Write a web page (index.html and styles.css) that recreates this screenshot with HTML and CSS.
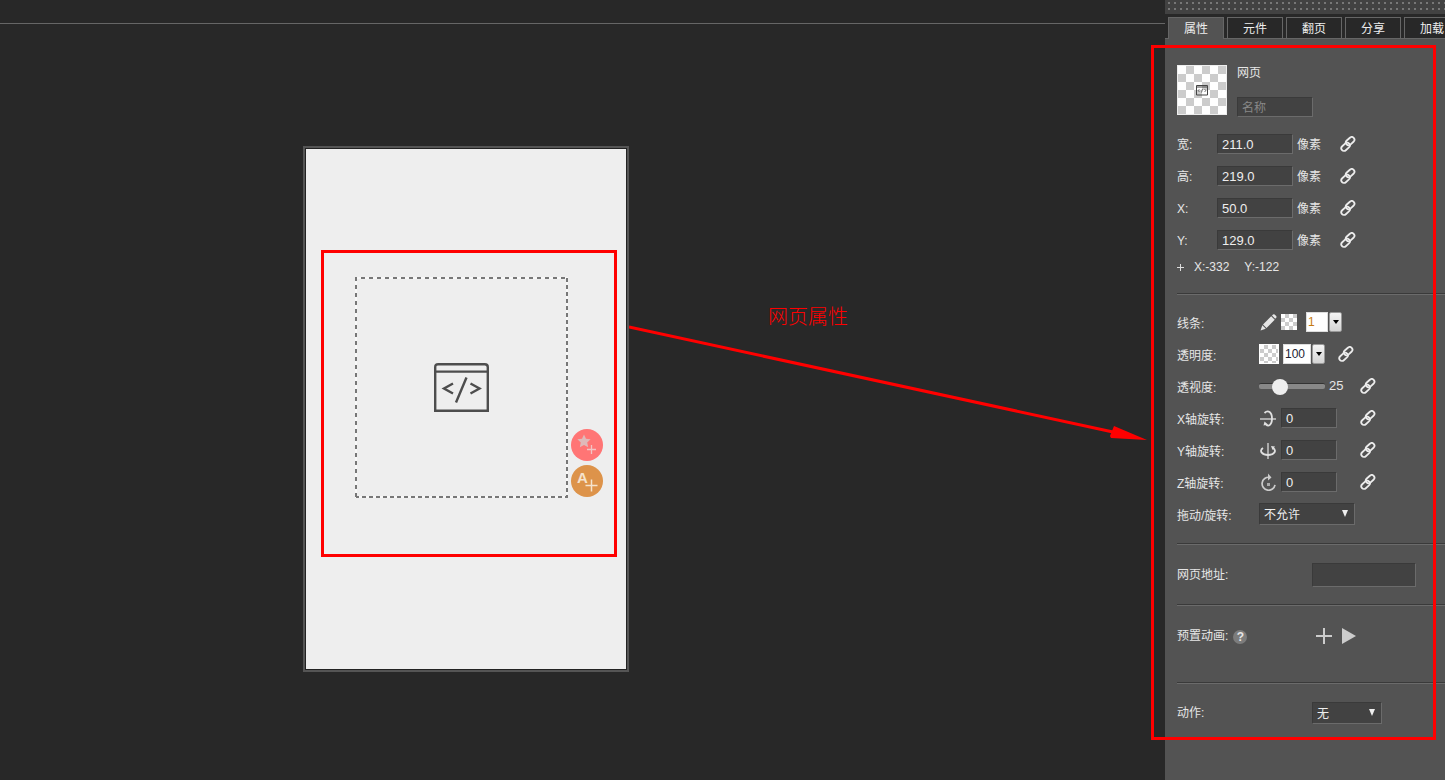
FILE: index.html
```
<!DOCTYPE html>
<html lang="zh-CN">
<head>
    <meta charset="UTF-8">
    <meta name="viewport" content="width=device-width, initial-scale=1.0">
    <title>网页属性</title>
    <link rel="stylesheet" href="styles.css">
</head>
<body>

<!-- shared icons -->
<svg class="sprite" aria-hidden="true">
    <symbol id="link" viewBox="0 0 16 16">
        <g fill="none" stroke="#ececec" stroke-width="1.8" transform="rotate(-42 8 8)">
            <rect x="-0.5" y="5.8" width="9.6" height="5.4" rx="2.7"/>
            <rect x="6.7" y="4.6" width="9.6" height="5.4" rx="2.7"/>
        </g>
    </symbol>
</svg>

<div class="editor">
    <main class="workspace">
        <div class="ruler"></div>
        <div class="stage">
            <div class="web-element">
                <svg class="dashes" aria-hidden="true">
                    <g fill="none" stroke-width="2">
                        <rect x="1" y="1" width="211" height="219" stroke="#f8f8f8"/>
                        <path d="M1 220V1H212" stroke="#777" stroke-dasharray="4 4"/>
                        <path d="M212 1V220H1" stroke="#777" stroke-dasharray="4 3"/>
                    </g>
                </svg>
                <svg class="code-icon" viewBox="0 0 56 50" aria-hidden="true">
                    <g fill="none" stroke="#4d4d4d" stroke-width="2.4">
                        <path d="M1.2 47.8V4.2q0-3 3-3h46.600q3 0 3 3v43.600zM1.200 8.600h52.600"/>
                        <path d="M19 20.500 10 25.500l9 5M36.500 20.500l9 5-9 5M32.500 14.500 22 39.500"/>
                    </g>
                </svg>
            </div>
            <div class="mark mark-element"></div>
            <div class="float-buttons">
                <button class="round round-star" type="button" aria-label="添加动画">
                    <svg viewBox="0 0 32 32">
                        <path fill="#dfb9b9" d="M13 5.500l2 4.300 4.600.5-3.400 3.200 1 4.800-4.200-2.400-4.200 2.400 1-4.800-3.400-3.200 4.600-.5z"/>
                        <path fill="none" stroke="#f2c4c4" stroke-width="1.300" d="M20.500 16v9M16 20.500h9"/>
                    </svg>
                </button>
                <button class="round round-text" type="button" aria-label="添加文字">
                    <svg viewBox="0 0 32 32">
                        <text x="6" y="18" class="round-letter">A</text>
                        <path fill="none" stroke="#f5e3cd" stroke-width="1.500" d="M20.500 14.500v12M14.500 20.500h12"/>
                    </svg>
                </button>
            </div>
        </div>
        <svg class="arrow" aria-hidden="true">
            <path d="M0 3 484 108" stroke="#f00" stroke-width="3"/>
            <path d="M481 112 485 102 518 116 482 114z" fill="#f00"/>
        </svg>
        <p class="note">网页属性</p>
    </main>

    <aside class="panel">
        <div class="grip"></div>
        <nav class="tabs">
            <button class="tab active" type="button">属性</button>
            <button class="tab" type="button">元件</button>
            <button class="tab" type="button">翻页</button>
            <button class="tab" type="button">分享</button>
            <button class="tab" type="button">加载</button>
        </nav>

        <form class="props">
            <section class="group group-size">
                <div class="head">
                    <div class="thumb">
                        <svg viewBox="0 0 12 11" aria-hidden="true">
                            <path d="M.5.5h11v9.500H.5zM.5 2h11" fill="none" stroke="#444"/>
                            <path d="M3.500 4.500 2 5.500l1.500 1.500M8.500 4.500l1.500 1-1.500 1.500M6.500 4 5.500 7.500" fill="none" stroke="#555" stroke-width=".8"/>
                        </svg>
                    </div>
                    <div class="head-text">
                        <label for="name">网页</label>
                        <input class="field" type="text" id="name" placeholder="名称">
                    </div>
                </div>
                <div class="row">
                    <label class="short" for="width">宽:</label>
                    <input class="field" type="text" id="width" value="211.0">
                    <span class="unit">像素</span>
                    <button class="link" type="button" aria-label="关联"><svg><use href="#link"/></svg></button>
                </div>
                <div class="row">
                    <label class="short" for="height">高:</label>
                    <input class="field" type="text" id="height" value="219.0">
                    <span class="unit">像素</span>
                    <button class="link" type="button" aria-label="关联"><svg><use href="#link"/></svg></button>
                </div>
                <div class="row">
                    <label class="short" for="pos-x">X:</label>
                    <input class="field" type="text" id="pos-x" value="50.0">
                    <span class="unit">像素</span>
                    <button class="link" type="button" aria-label="关联"><svg><use href="#link"/></svg></button>
                </div>
                <div class="row">
                    <label class="short" for="pos-y">Y:</label>
                    <input class="field" type="text" id="pos-y" value="129.0">
                    <span class="unit">像素</span>
                    <button class="link" type="button" aria-label="关联"><svg><use href="#link"/></svg></button>
                </div>
                <div class="coords">
                    <svg viewBox="0 0 7 7" aria-hidden="true"><path d="M3.500 0v7M0 3.500h7" stroke="#ddd"/></svg>
                    <span>X:-332</span>
                    <span>Y:-122</span>
                </div>
            </section>

            <section class="group group-style">
                <div class="row">
                    <label for="line">线条:</label>
                    <svg class="icon" viewBox="0 0 18 18" aria-hidden="true">
                        <path fill="#e6e6e6" d="M1.500 17.500l1.800-5.200 3.500 3.400zM4 11.500l8.200-8.300 3.500 3.500-8.200 8.300zM13 2.500l1-1q.8-.7 1.600 0l1.600 1.600q.7.8 0 1.600l-1 1z"/>
                    </svg>
                    <span class="checker checker-small"></span>
                    <div class="combo combo-line">
                        <input type="text" id="line" value="1">
                        <button type="button" aria-label="选择线宽"></button>
                    </div>
                </div>
                <div class="row">
                    <label for="opacity">透明度:</label>
                    <span class="checker"></span>
                    <div class="combo combo-opacity">
                        <input type="text" id="opacity" value="100">
                        <button type="button" aria-label="选择透明度"></button>
                    </div>
                    <button class="link" type="button" aria-label="关联"><svg><use href="#link"/></svg></button>
                </div>
                <div class="row">
                    <label for="perspective">透视度:</label>
                    <input class="slider" type="range" id="perspective" min="0" max="100" value="25">
                    <output class="slider-value" for="perspective">25</output>
                    <button class="link" type="button" aria-label="关联"><svg><use href="#link"/></svg></button>
                </div>
                <div class="row">
                    <label for="rotate-x">X轴旋转:</label>
                    <svg class="icon" viewBox="0 0 18 18" aria-hidden="true">
                        <path d="M1 10h16" stroke="#aaa" stroke-width="2"/>
                        <path d="M5.500 4C9 .5 13 3 13 9.500s-3.500 8.500-6 6" fill="none" stroke="#e0e0e0" stroke-width="1.800"/>
                        <path d="M4.500 16.500l1-4 3.500 3z" fill="#e0e0e0"/>
                    </svg>
                    <input class="field field-small" type="text" id="rotate-x" value="0">
                    <button class="link link-end" type="button" aria-label="关联"><svg><use href="#link"/></svg></button>
                </div>
                <div class="row">
                    <label for="rotate-y">Y轴旋转:</label>
                    <svg class="icon" viewBox="0 0 18 18" aria-hidden="true">
                        <path d="M9 2v16" stroke="#aaa" stroke-width="2"/>
                        <path d="M4 7C-.5 10 3.500 14 9 14s9.500-4 5-7" fill="none" stroke="#e0e0e0" stroke-width="1.800"/>
                        <path d="M16 5.500l-4-.5 1.500 4z" fill="#e0e0e0"/>
                    </svg>
                    <input class="field field-small" type="text" id="rotate-y" value="0">
                    <button class="link link-end" type="button" aria-label="关联"><svg><use href="#link"/></svg></button>
                </div>
                <div class="row">
                    <label for="rotate-z">Z轴旋转:</label>
                    <svg class="icon" viewBox="0 0 18 18" aria-hidden="true">
                        <path d="M10.500 4.300a6.500 6.500 0 1 0 5.500 7.500" fill="none" stroke="#ccc" stroke-width="1.700"/>
                        <path d="M9 .5v7l3.500-3z" fill="#ccc"/>
                        <path d="M8 10h3v3H8z" fill="#aaa"/>
                    </svg>
                    <input class="field field-small" type="text" id="rotate-z" value="0">
                    <button class="link link-end" type="button" aria-label="关联"><svg><use href="#link"/></svg></button>
                </div>
                <div class="row">
                    <label for="drag">拖动/旋转:</label>
                    <select class="field select-drag" id="drag">
                        <option>不允许</option>
                    </select>
                </div>
            </section>

            <section class="group group-url">
                <div class="row">
                    <label for="url">网页地址:</label>
                    <input class="field field-url" type="text" id="url">
                </div>
            </section>

            <section class="group group-preset">
                <div class="row">
                    <div class="row-title">预置动画:<span class="help">?</span></div>
                    <button class="plain" type="button" aria-label="添加">
                        <svg viewBox="0 0 16 16"><path d="M8 0v16M0 8h16" stroke="#ccc" stroke-width="2"/></svg>
                    </button>
                    <button class="plain" type="button" aria-label="播放">
                        <svg viewBox="0 0 16 16"><path d="M1 0v16l14-8z" fill="#ccc"/></svg>
                    </button>
                </div>
            </section>

            <section class="group group-action">
                <div class="row">
                    <label for="action">动作:</label>
                    <select class="field select-action" id="action">
                        <option>无</option>
                    </select>
                </div>
            </section>
        </form>
        <div class="mark mark-panel"></div>
    </aside>
</div>

</body>
</html>
```

FILE: styles.css
```
* {
    box-sizing: border-box;
}

body {
    margin: 0;
    background-color: #282828;
    color: #e6e6e6;
    font-family: "Liberation Sans", "Noto Sans CJK SC", sans-serif;
    font-size: 12px;
    line-height: 16px;
}

button,
input,
select {
    font-family: inherit;
    margin: 0;
}

svg {
    display: block;
}

.sprite {
    position: absolute;
    width: 0;
    height: 0;
}

.editor {
    display: flex;
    min-height: 100vh;
    overflow: hidden;
}

/* workspace */
.workspace {
    position: relative;
    flex: 1;
    min-width: 0;
}

.ruler {
    height: 24px;
    border-bottom: 1px solid #666;
}

.stage {
    position: relative;
    width: 326px;
    height: 526px;
    margin: 122px 0 0 303px;
    border: 2px solid #555;
    background-color: #eee;
    box-shadow: inset 0 0 0 1px #222;
}

/* items placed freely on the canvas */
.web-element {
    position: absolute;
    left: 50px;
    top: 129px;
    width: 213px;
    height: 221px;
    display: flex;
    align-items: center;
    justify-content: center;
}

.dashes {
    position: absolute;
    left: 0;
    top: 0;
    width: 100%;
    height: 100%;
}

.code-icon {
    width: 56px;
    height: 50px;
}

.float-buttons {
    position: absolute;
    left: 266px;
    top: 281px;
    display: flex;
    flex-direction: column;
    gap: 4px;
}

.round {
    width: 32px;
    height: 32px;
    padding: 0;
    border: none;
    border-radius: 50%;
}

.round-star {
    background-color: #ff7575;
}

.round-text {
    background-color: #dd934a;
}

.round-letter {
    font-size: 15px;
    font-weight: bold;
    fill: #f5e3cd;
}

.mark {
    position: absolute;
    border: 3px solid #f00;
    pointer-events: none;
}

.mark-element {
    left: 16px;
    top: 102px;
    width: 296px;
    height: 307px;
}

.mark-panel {
    left: -14px;
    right: 9px;
    top: 45px;
    height: 695px;
}

.arrow {
    position: absolute;
    left: 629px;
    top: 324px;
    width: 520px;
    height: 120px;
}

.note {
    position: absolute;
    left: 768px;
    top: 305px;
    margin: 0;
    color: #f00;
    font-size: 20px;
    font-weight: 300;
    line-height: 24px;
}

/* right panel */
.panel {
    position: relative;
    width: 280px;
    flex-shrink: 0;
    background-color: #535353;
}

.grip {
    height: 14px;
    background-color: #424242;
    background-image: url("data:image/svg+xml,%3Csvg xmlns='http://www.w3.org/2000/svg' width='6' height='6'%3E%3Cpath d='M3 2h2v2H3z' fill='%23777'/%3E%3C/svg%3E");
}

.tabs {
    display: flex;
    gap: 3px;
    height: 25px;
    padding: 3px 0 0 3px;
    background-color: #282828;
    box-shadow: inset 0 -1px #666;
    overflow: hidden;
}

.tab {
    flex: 0 0 56px;
    padding: 0 0 2px;
    border: 1px solid #666;
    background-color: #282828;
    color: #eee;
    font-size: 12px;
}

.tab.active {
    border-bottom: none;
    background-color: #535353;
}

.group {
    margin-left: 12px;
    border-bottom: 1px solid #6b6b6b;
    box-shadow: inset 0 -1px #3a3a3a;
}

.group:last-child {
    border-bottom: none;
    box-shadow: none;
}

.row {
    display: flex;
    align-items: center;
    height: 32px;
}

.row label {
    width: 82px;
    flex-shrink: 0;
    padding-top: 2px;
}

.row .short {
    width: 40px;
}

.field {
    width: 76px;
    height: 20px;
    padding: 0 4px;
    border: 1px solid;
    border-color: #3a3a3a #6b6b6b #6b6b6b #3a3a3a;
    border-radius: 0;
    outline: none;
    background-color: #424242;
    color: #eee;
    font-size: 13px;
}

.field::placeholder {
    color: #888;
    font-size: 12px;
}

.unit {
    width: 43px;
    padding: 2px 0 0 4px;
}

.link {
    width: 16px;
    height: 16px;
    margin-left: 4px;
    padding: 0;
    border: none;
    background: none;
}

.link svg {
    width: 16px;
    height: 16px;
}

.link-end {
    margin-left: 23px;
}

.group-size {
    padding: 26px 0 16px;
}

.head {
    display: flex;
    gap: 10px;
    height: 63px;
}

.thumb,
.checker {
    background: repeating-conic-gradient(#ccc 0 25%, #fff 0 50%) 0 0 / 16px 16px;
}

.thumb {
    display: flex;
    align-items: center;
    justify-content: center;
    width: 50px;
    height: 50px;
    border: 1px solid #eee;
}

.thumb svg {
    width: 12px;
    height: 11px;
}

.head-text {
    display: flex;
    flex-direction: column;
    gap: 16px;
}

.coords {
    display: flex;
    align-items: center;
    gap: 15px;
    height: 22px;
}

.coords svg {
    width: 7px;
    height: 7px;
    margin-right: -5px;
}

.group-style {
    padding: 11px 0 14px;
}

.group-style .row label {
    padding-top: 4px;
}

.icon {
    width: 18px;
    height: 18px;
    margin-right: 4px;
}

.checker {
    width: 20px;
    height: 20px;
    background-size: 8px 8px;
    border: 1px solid #fff;
}

.checker-small {
    width: 16px;
    height: 16px;
    border: none;
}

.combo {
    display: flex;
    gap: 1px;
    margin-left: 4px;
}

.combo input {
    width: 28px;
    height: 20px;
    padding: 0 1px;
    border: 1px solid #ddd;
    outline: none;
    background-color: #fff;
    color: #223;
    font-size: 12px;
}

.combo-line {
    margin-left: 9px;
}

.combo-line input {
    width: 22px;
    color: #c47a10;
}

.combo button {
    display: flex;
    align-items: center;
    justify-content: center;
    width: 13px;
    height: 20px;
    padding: 0;
    border: 1px solid #999;
    border-radius: 2px;
    background: linear-gradient(#f4f4f4, #d4d4d4);
}

.combo button::after {
    content: "";
    border: 3px solid transparent;
    border-top: 4px solid #000;
    border-bottom: none;
}

.combo-opacity + .link {
    margin-left: 13px;
}

.slider {
    width: 66px;
    height: 16px;
    appearance: none;
    background: none;
}

.slider::-webkit-slider-runnable-track {
    height: 6px;
    border-top: 1px solid #333;
    border-radius: 2px;
    background-color: #888;
}

.slider::-webkit-slider-thumb {
    appearance: none;
    width: 16px;
    height: 16px;
    margin-top: -5px;
    border-radius: 50%;
    background-color: #eee;
}

.slider-value {
    width: 31px;
    padding-left: 4px;
    font-size: 13px;
}

.field-small {
    width: 56px;
}

select.field {
    height: 22px;
    padding-top: 2px;
    appearance: none;
    background-image: url("data:image/svg+xml,%3Csvg xmlns='http://www.w3.org/2000/svg' width='6' height='7'%3E%3Cpath d='M0 0h6L3 7z' fill='%23eee'/%3E%3C/svg%3E");
    background-repeat: no-repeat;
    background-position: right 6px top 6px;
    font-size: 12px;
}

.select-drag {
    width: 96px;
}

.select-action {
    width: 70px;
}

.group-url .row,
.group-preset .row {
    height: 60px;
}

.group-action .row {
    height: 58px;
}

.group-url .row label,
.group-action .row label {
    width: 135px;
    padding: 0;
}

.field-url {
    width: 104px;
    height: 24px;
}

.group-preset {
    padding-bottom: 17px;
}

.row-title {
    display: flex;
    gap: 5px;
    width: 139px;
}

.help {
    width: 14px;
    height: 14px;
    margin-top: 2px;
    border-radius: 50%;
    background-color: #7c7c7c;
    font-weight: bold;
    line-height: 14px;
    text-align: center;
}

.plain {
    width: 16px;
    height: 16px;
    margin-right: 9px;
    padding: 0;
    border: none;
    background: none;
}
```
